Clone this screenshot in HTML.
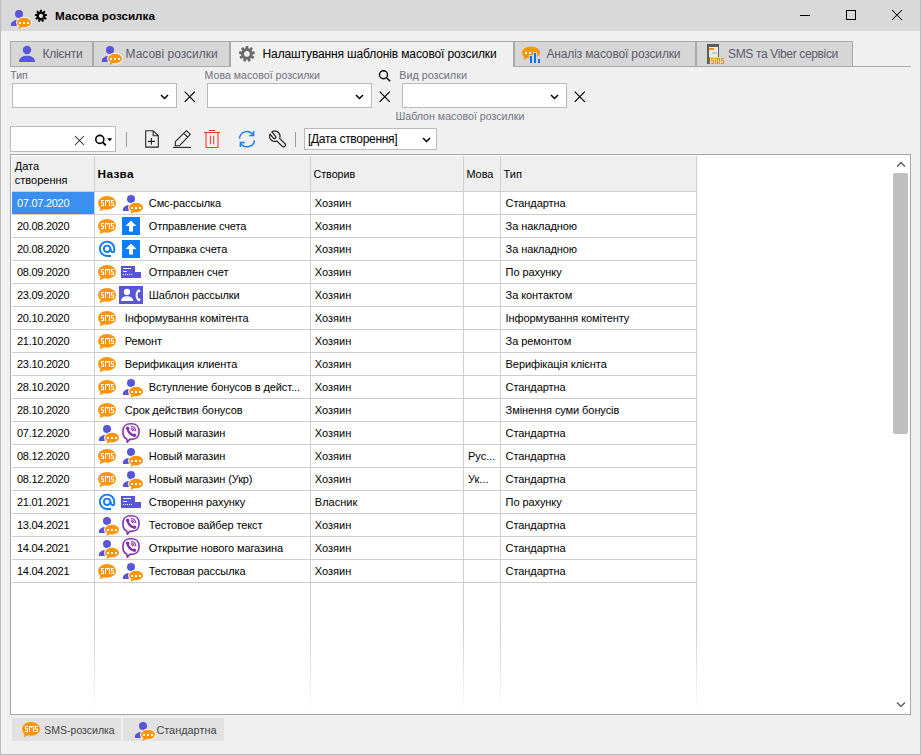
<!DOCTYPE html>
<html><head><meta charset="utf-8">
<style>
*{margin:0;padding:0;box-sizing:border-box}
html,body{width:921px;height:755px;overflow:hidden;background:#f0f0f0;font-family:"Liberation Sans",sans-serif;color:#000}
.a{position:absolute}
.t{white-space:nowrap}
svg{overflow:visible}
</style></head><body>
<div class="a" style="left:0px;top:0px;width:921px;height:755px;background:#f0f0f0;"></div>
<div class="a" style="left:0px;top:0px;width:921px;height:31px;background:#d9d9d9;"></div>
<div class="a" style="left:0px;top:0px;width:1px;height:755px;background:#bcbcbc;"></div>
<div class="a" style="left:920px;top:0px;width:1px;height:755px;background:#bcbcbc;"></div>
<div class="a" style="left:0px;top:754px;width:921px;height:1px;background:#bcbcbc;"></div>
<svg class="a" style="left:10px;top:9px" width="21" height="20" viewBox="0 0 21 20"><circle cx="9" cy="4.9" r="4" fill="#5856d6"/><path d="M0.9 17 L0.9 14.8 C1.6 12.6 4 11.2 6.8 11 L6.8 17 Z" fill="#5856d6"/><ellipse cx="14" cy="13.6" rx="7.9" ry="5.8" fill="#fff"/><ellipse cx="14" cy="13.6" rx="7" ry="4.9" fill="#fd950a"/><path d="M9.5 16.5 L8.6 19.9 L13 17.8 Z" fill="#fd950a"/><rect x="9" y="13" width="2" height="2" fill="#fff"/><rect x="13" y="13" width="2" height="2" fill="#fff"/><rect x="17" y="13" width="2" height="2" fill="#fff"/></svg>
<svg class="a" style="left:0;top:0" width="921" height="100" viewBox="0 0 921 100"><path d="M39.70 11.79 L39.57 11.83 L39.44 11.88 L39.30 11.93 L39.18 11.98 L39.15 12.00 L37.75 10.62 L36.31 11.83 L37.42 13.45 L37.37 13.51 L37.30 13.63 L37.23 13.75 L37.16 13.87 L37.09 14.00 L37.06 14.07 L35.11 13.91 L34.78 15.77 L36.67 16.29 L36.67 16.32 L36.69 16.46 L36.71 16.60 L36.73 16.74 L36.76 16.88 L36.79 17.00 L35.19 18.13 L36.14 19.77 L37.92 18.95 L38.01 19.04 L38.11 19.13 L38.22 19.22 L38.33 19.31 L38.45 19.40 L38.47 19.41 L37.98 21.31 L39.75 21.96 L40.59 20.18 L40.67 20.19 L40.81 20.20 L40.95 20.20 L41.09 20.20 L41.23 20.19 L41.31 20.18 L42.15 21.96 L43.92 21.31 L43.43 19.41 L43.45 19.40 L43.57 19.31 L43.68 19.22 L43.79 19.13 L43.89 19.04 L43.98 18.95 L45.76 19.77 L46.71 18.13 L45.11 17.00 L45.14 16.88 L45.17 16.74 L45.19 16.60 L45.21 16.46 L45.23 16.32 L45.23 16.29 L47.12 15.77 L46.79 13.91 L44.84 14.07 L44.81 14.00 L44.74 13.87 L44.67 13.75 L44.60 13.63 L44.53 13.51 L44.48 13.45 L45.59 11.83 L44.15 10.62 L42.75 12.00 L42.72 11.98 L42.60 11.93 L42.46 11.88 L42.33 11.83 L42.20 11.79 L42.08 11.75 L41.90 9.80 L40.01 9.80 L39.82 11.75 L39.70 11.79 Z M43.05 16.00 L43.04 16.11 L43.03 16.21 L43.01 16.31 L42.99 16.41 L42.96 16.51 L42.93 16.61 L42.89 16.70 L42.85 16.80 L42.80 16.89 L42.75 16.98 L42.70 17.07 L42.64 17.15 L42.57 17.23 L42.51 17.31 L42.43 17.38 L42.36 17.46 L42.28 17.52 L42.20 17.59 L42.12 17.65 L42.03 17.70 L41.94 17.75 L41.85 17.80 L41.75 17.84 L41.66 17.88 L41.56 17.91 L41.46 17.94 L41.36 17.96 L41.26 17.98 L41.16 17.99 L41.05 18.00 L40.95 18.00 L40.85 18.00 L40.74 17.99 L40.64 17.98 L40.54 17.96 L40.44 17.94 L40.34 17.91 L40.24 17.88 L40.15 17.84 L40.05 17.80 L39.96 17.75 L39.87 17.70 L39.78 17.65 L39.70 17.59 L39.62 17.52 L39.54 17.46 L39.47 17.38 L39.39 17.31 L39.33 17.23 L39.26 17.15 L39.20 17.07 L39.15 16.98 L39.10 16.89 L39.05 16.80 L39.01 16.70 L38.97 16.61 L38.94 16.51 L38.91 16.41 L38.89 16.31 L38.87 16.21 L38.86 16.11 L38.85 16.00 L38.85 15.90 L38.85 15.80 L38.86 15.69 L38.87 15.59 L38.89 15.49 L38.91 15.39 L38.94 15.29 L38.97 15.19 L39.01 15.10 L39.05 15.00 L39.10 14.91 L39.15 14.82 L39.20 14.73 L39.26 14.65 L39.33 14.57 L39.39 14.49 L39.47 14.42 L39.54 14.34 L39.62 14.28 L39.70 14.21 L39.78 14.15 L39.87 14.10 L39.96 14.05 L40.05 14.00 L40.15 13.96 L40.24 13.92 L40.34 13.89 L40.44 13.86 L40.54 13.84 L40.64 13.82 L40.74 13.81 L40.85 13.80 L40.95 13.80 L41.05 13.80 L41.16 13.81 L41.26 13.82 L41.36 13.84 L41.46 13.86 L41.56 13.89 L41.66 13.92 L41.75 13.96 L41.85 14.00 L41.94 14.05 L42.03 14.10 L42.12 14.15 L42.20 14.21 L42.28 14.28 L42.36 14.34 L42.43 14.42 L42.51 14.49 L42.57 14.57 L42.64 14.65 L42.70 14.73 L42.75 14.82 L42.80 14.91 L42.85 15.00 L42.89 15.10 L42.93 15.19 L42.96 15.29 L42.99 15.39 L43.01 15.49 L43.03 15.59 L43.04 15.69 L43.05 15.80 L43.05 15.90 L43.05 16.00 Z" fill="#000" fill-rule="evenodd"/></svg>
<div class="a t" style="left:55px;top:7.95px;font-size:11.7px;line-height:15px;color:#000;font-weight:bold;">Масова розсилка</div>
<div class="a" style="left:800px;top:15px;width:10px;height:1px;background:#000;"></div>
<div class="a" style="left:846px;top:10px;width:10px;height:10px;background:transparent;border:1px solid #000;"></div>
<svg class="a" style="left:891px;top:9px" width="12" height="12" viewBox="0 0 12 12"><path d="M1 1 L11 11 M11 1 L1 11" stroke="#000" stroke-width="1.05"/></svg>
<div class="a" style="left:10px;top:66px;width:901px;height:1px;background:#a9a9a9;"></div>
<div class="a" style="left:10px;top:41px;width:83px;height:26px;background:#d6d6d6;border:1px solid #a9a9a9;"></div>
<div class="a" style="left:93px;top:41px;width:137px;height:26px;background:#d6d6d6;border:1px solid #a9a9a9;"></div>
<div class="a" style="left:514px;top:41px;width:182px;height:26px;background:#d6d6d6;border:1px solid #a9a9a9;"></div>
<div class="a" style="left:696px;top:41px;width:157px;height:26px;background:#d6d6d6;border:1px solid #a9a9a9;"></div>
<div class="a" style="left:230px;top:41px;width:284px;height:26px;background:#f0f0f0;border:1px solid #a9a9a9;border-bottom:none"></div>
<svg class="a" style="left:18px;top:45px" width="18" height="18" viewBox="0 0 18 18"><circle cx="9" cy="5" r="4.2" fill="#5856d6"/><path d="M1 17 C1 12.5 5 10.8 9 10.8 C13 10.8 17 12.5 17 17 Z" fill="#5856d6"/></svg>
<div class="a t" style="left:42.4px;top:45.84px;font-size:12px;line-height:16px;color:#5b5b6b;font-weight:normal;letter-spacing:-0.23px">Клієнти</div>
<svg class="a" style="left:101px;top:45px" width="21" height="20" viewBox="0 0 21 20"><circle cx="9" cy="4.9" r="4" fill="#5856d6"/><path d="M0.9 17 L0.9 14.8 C1.6 12.6 4 11.2 6.8 11 L6.8 17 Z" fill="#5856d6"/><ellipse cx="14" cy="13.6" rx="7.9" ry="5.8" fill="#fff"/><ellipse cx="14" cy="13.6" rx="7" ry="4.9" fill="#fd950a"/><path d="M9.5 16.5 L8.6 19.9 L13 17.8 Z" fill="#fd950a"/><rect x="9" y="13" width="2" height="2" fill="#fff"/><rect x="13" y="13" width="2" height="2" fill="#fff"/><rect x="17" y="13" width="2" height="2" fill="#fff"/></svg>
<div class="a t" style="left:125.5px;top:45.84px;font-size:12px;line-height:16px;color:#5b5b6b;font-weight:normal;">Масові розсилки</div>
<svg class="a" style="left:0;top:0" width="921" height="100" viewBox="0 0 921 100"><path d="M245.42 48.39 L245.25 48.45 L245.07 48.50 L244.89 48.57 L244.72 48.63 L244.55 48.71 L244.48 48.74 L242.75 47.07 L240.89 48.63 L242.24 50.62 L242.16 50.73 L242.06 50.89 L241.96 51.05 L241.87 51.21 L241.79 51.38 L241.73 51.50 L239.33 51.33 L238.91 53.72 L241.22 54.39 L241.23 54.46 L241.25 54.64 L241.28 54.83 L241.31 55.01 L241.35 55.19 L241.39 55.38 L241.40 55.38 L239.45 56.80 L240.67 58.90 L242.86 57.92 L242.87 57.93 L243.00 58.06 L243.14 58.19 L243.28 58.31 L243.43 58.42 L243.58 58.53 L243.64 58.57 L243.06 60.91 L245.34 61.74 L246.40 59.58 L246.53 59.59 L246.71 59.60 L246.90 59.60 L247.09 59.60 L247.27 59.59 L247.40 59.58 L248.46 61.74 L250.74 60.91 L250.16 58.57 L250.22 58.53 L250.37 58.42 L250.52 58.31 L250.66 58.19 L250.80 58.06 L250.93 57.93 L250.94 57.92 L253.13 58.90 L254.35 56.80 L252.40 55.38 L252.41 55.38 L252.45 55.19 L252.49 55.01 L252.52 54.83 L252.55 54.64 L252.57 54.46 L252.58 54.39 L254.89 53.72 L254.47 51.33 L252.07 51.50 L252.01 51.38 L251.93 51.21 L251.84 51.05 L251.74 50.89 L251.64 50.73 L251.56 50.62 L252.91 48.63 L251.05 47.07 L249.32 48.74 L249.25 48.71 L249.08 48.63 L248.91 48.57 L248.73 48.50 L248.55 48.45 L248.38 48.39 L248.37 48.39 L248.12 46.00 L245.69 46.00 L245.43 48.39 L245.42 48.39 Z M249.80 54.04 L249.79 54.18 L249.77 54.33 L249.74 54.47 L249.71 54.60 L249.68 54.74 L249.63 54.88 L249.58 55.01 L249.52 55.14 L249.46 55.27 L249.39 55.39 L249.31 55.51 L249.23 55.63 L249.14 55.74 L249.05 55.85 L248.95 55.95 L248.85 56.05 L248.74 56.14 L248.63 56.23 L248.51 56.31 L248.39 56.39 L248.27 56.46 L248.14 56.52 L248.01 56.58 L247.88 56.63 L247.74 56.68 L247.60 56.71 L247.47 56.74 L247.33 56.77 L247.18 56.79 L247.04 56.80 L246.90 56.80 L246.76 56.80 L246.62 56.79 L246.47 56.77 L246.33 56.74 L246.20 56.71 L246.06 56.68 L245.92 56.63 L245.79 56.58 L245.66 56.52 L245.53 56.46 L245.41 56.39 L245.29 56.31 L245.17 56.23 L245.06 56.14 L244.95 56.05 L244.85 55.95 L244.75 55.85 L244.66 55.74 L244.57 55.63 L244.49 55.51 L244.41 55.39 L244.34 55.27 L244.28 55.14 L244.22 55.01 L244.17 54.88 L244.12 54.74 L244.09 54.60 L244.06 54.47 L244.03 54.33 L244.01 54.18 L244.00 54.04 L244.00 53.90 L244.00 53.76 L244.01 53.62 L244.03 53.47 L244.06 53.33 L244.09 53.20 L244.12 53.06 L244.17 52.92 L244.22 52.79 L244.28 52.66 L244.34 52.53 L244.41 52.41 L244.49 52.29 L244.57 52.17 L244.66 52.06 L244.75 51.95 L244.85 51.85 L244.95 51.75 L245.06 51.66 L245.17 51.57 L245.29 51.49 L245.41 51.41 L245.53 51.34 L245.66 51.28 L245.79 51.22 L245.92 51.17 L246.06 51.12 L246.20 51.09 L246.33 51.06 L246.47 51.03 L246.62 51.01 L246.76 51.00 L246.90 51.00 L247.04 51.00 L247.18 51.01 L247.33 51.03 L247.47 51.06 L247.60 51.09 L247.74 51.12 L247.88 51.17 L248.01 51.22 L248.14 51.28 L248.27 51.34 L248.39 51.41 L248.51 51.49 L248.63 51.57 L248.74 51.66 L248.85 51.75 L248.95 51.85 L249.05 51.95 L249.14 52.06 L249.23 52.17 L249.31 52.29 L249.39 52.41 L249.46 52.53 L249.52 52.66 L249.58 52.79 L249.63 52.92 L249.68 53.06 L249.71 53.20 L249.74 53.33 L249.77 53.47 L249.79 53.62 L249.80 53.76 L249.80 53.90 L249.80 54.04 Z" fill="#6a6a6a" fill-rule="evenodd"/></svg>
<div class="a t" style="left:262.6px;top:45.84px;font-size:12px;line-height:16px;color:#000;font-weight:normal;letter-spacing:-0.14px">Налаштування шаблонів масової розсилки</div>
<svg class="a" style="left:0;top:0" width="921" height="100" viewBox="0 0 921 100"><ellipse cx="531" cy="52.6" rx="9.2" ry="6" fill="#fd950a"/><path d="M523.3 55.5 L524.3 59.8 L528.5 57.2 Z" fill="#fd950a"/><rect x="525" y="52" width="2" height="2" fill="#fff"/><rect x="529" y="52" width="2" height="2" fill="#fff"/><path d="M529 63 V55 H533 V52 H537 V58 H541 V63 Z" fill="#d6d6d6"/><rect x="530" y="56" width="2" height="7" fill="#0a70f5"/><rect x="534" y="53" width="2" height="10" fill="#0a70f5"/><rect x="538" y="59" width="2" height="4" fill="#0a70f5"/></svg>
<div class="a t" style="left:546.5px;top:45.84px;font-size:12px;line-height:16px;color:#5b5b6b;font-weight:normal;letter-spacing:-0.15px">Аналіз масової розсилки</div>
<svg class="a" style="left:0;top:0" width="921" height="100" viewBox="0 0 921 100" shape-rendering="crispEdges"><rect x="707" y="44" width="12" height="3" fill="#5c5c5c"/><rect x="707" y="44" width="2" height="20" fill="#5c5c5c"/><rect x="718" y="44" width="1" height="13" fill="#5c5c5c"/><rect x="709" y="57" width="1" height="7" fill="#777"/><rect x="709" y="47" width="9" height="10" fill="#e9e9e9"/><rect x="709" y="48" width="5" height="2" fill="#ff9400"/><rect x="712" y="52" width="5" height="2" fill="#c8c8c8"/><rect x="711" y="58" width="3" height="1" fill="#ff9400"/><rect x="711" y="58" width="1" height="3" fill="#ff9400"/><rect x="711" y="60" width="3" height="1" fill="#ff9400"/><rect x="713" y="60" width="1" height="4" fill="#ff9400"/><rect x="711" y="63" width="3" height="1" fill="#ff9400"/><rect x="715" y="58" width="5" height="1" fill="#ff9400"/><rect x="715" y="58" width="1" height="6" fill="#ff9400"/><rect x="719" y="58" width="1" height="6" fill="#ff9400"/><rect x="717" y="58" width="1" height="4" fill="#ff9400"/><rect x="717" y="62" width="1" height="2" fill="#777"/><rect x="721" y="58" width="3" height="1" fill="#ff9400"/><rect x="721" y="58" width="1" height="3" fill="#ff9400"/><rect x="721" y="60" width="3" height="1" fill="#ff9400"/><rect x="723" y="60" width="1" height="4" fill="#ff9400"/><rect x="721" y="63" width="3" height="1" fill="#ff9400"/></svg>
<div class="a t" style="left:728px;top:45.84px;font-size:12px;line-height:16px;color:#5b5b6b;font-weight:normal;letter-spacing:-0.35px">SMS та Viber сервіси</div>
<div class="a t" style="left:10.3px;top:69.40px;font-size:10.4px;line-height:14px;color:#707080;font-weight:normal;">Тип</div>
<div class="a t" style="left:204.6px;top:68.33px;font-size:10.6px;line-height:14px;color:#707080;font-weight:normal;">Мова масової розсилки</div>
<div class="a t" style="left:399.2px;top:68.26px;font-size:10.8px;line-height:14px;color:#707080;font-weight:normal;">Вид розсилки</div>
<div class="a t" style="left:395.5px;top:109.31px;font-size:10.65px;line-height:14px;color:#707080;font-weight:normal;">Шаблон масової розсилки</div>
<div class="a" style="left:12px;top:83px;width:165px;height:25px;background:#fff;border:1px solid #b9b9b9;"></div>
<svg class="a" style="left:160px;top:94px" width="9" height="6" viewBox="0 0 9 6"><path d="M1 1 L4.5 4.5 L8 1" fill="none" stroke="#000" stroke-width="1.5"/></svg>
<svg class="a" style="left:184px;top:90.5px" width="12" height="12" viewBox="0 0 12 12"><path d="M0.7 0.7 L10.8 10.8 M10.8 0.7 L0.7 10.8" stroke="#000" stroke-width="1.2"/></svg>
<div class="a" style="left:207px;top:83px;width:165px;height:25px;background:#fff;border:1px solid #b9b9b9;"></div>
<svg class="a" style="left:355px;top:94px" width="9" height="6" viewBox="0 0 9 6"><path d="M1 1 L4.5 4.5 L8 1" fill="none" stroke="#000" stroke-width="1.5"/></svg>
<svg class="a" style="left:379px;top:90.5px" width="12" height="12" viewBox="0 0 12 12"><path d="M0.7 0.7 L10.8 10.8 M10.8 0.7 L0.7 10.8" stroke="#000" stroke-width="1.2"/></svg>
<div class="a" style="left:402px;top:83px;width:165px;height:25px;background:#fff;border:1px solid #b9b9b9;"></div>
<svg class="a" style="left:550px;top:94px" width="9" height="6" viewBox="0 0 9 6"><path d="M1 1 L4.5 4.5 L8 1" fill="none" stroke="#000" stroke-width="1.5"/></svg>
<svg class="a" style="left:574px;top:90.5px" width="12" height="12" viewBox="0 0 12 12"><path d="M0.7 0.7 L10.8 10.8 M10.8 0.7 L0.7 10.8" stroke="#000" stroke-width="1.2"/></svg>
<svg class="a" style="left:0px;top:0px" width="921" height="100" viewBox="0 0 921 100"><circle cx="383.5" cy="74.7" r="4" fill="none" stroke="#000" stroke-width="1.35"/><path d="M386.5 77.7 L390.2 81.3" stroke="#000" stroke-width="1.45"/></svg>
<div class="a" style="left:10px;top:126px;width:106px;height:26px;background:#fff;border:1px solid #b9b9b9;"></div>
<div class="a" style="left:295px;top:132px;width:1px;height:15px;background:#9a9a9a;"></div>
<div class="a" style="left:126px;top:132px;width:1px;height:15px;background:#9a9a9a;"></div>
<svg class="a" style="left:0;top:0" width="921" height="755" viewBox="0 0 921 755"><path d="M75 136 L84 145 M84 136 L75 145" stroke="#222" stroke-width="1.05"/><circle cx="99.8" cy="139.4" r="4" fill="none" stroke="#000" stroke-width="1.6"/><path d="M102.6 142.2 L105.8 145.4" stroke="#000" stroke-width="1.9"/><path d="M107.2 138.3 L112.2 138.3 L109.7 141.2 Z" fill="#000"/><path d="M145.7 130.7 H153.2 L158.3 135.8 V147.1 H145.7 Z M153.2 130.7 V135.8 H158.3" fill="none" stroke="#222" stroke-width="1.1" stroke-linejoin="miter"/><path d="M151.4 138 V144.8 M148 141.4 H154.9" stroke="#222" stroke-width="1.1"/><path d="M175.3 145.8 L175.3 141.6 L186.5 130.6 L190.3 134.3 L179.3 145.8 Z M183.9 133.4 L187.6 137.1" fill="none" stroke="#222" stroke-width="1.1" stroke-linejoin="round"/><path d="M173 147.4 H191" stroke="#222" stroke-width="1.1"/><path d="M203.9 132.5 H220.1 M208.8 130.5 H215.2 M206 132.5 V147.5 H218 V132.5 M210.4 135.8 V144.2 M213.7 135.8 V144.2" fill="none" stroke="#ef3a2d" stroke-width="1.05"/><path d="M239.5 138.6 A7.4 7.4 0 0 1 253 134.8" fill="none" stroke="#1a80f8" stroke-width="1.5"/><path d="M253.6 130.9 V135.5 H249.2" fill="none" stroke="#1a80f8" stroke-width="1.5"/><path d="M254.5 140.3 A7.4 7.4 0 0 1 240.9 143.3" fill="none" stroke="#1a80f8" stroke-width="1.5"/><path d="M240.4 146.9 V142.6 H244.8" fill="none" stroke="#1a80f8" stroke-width="1.5"/><path d="M279.97 135.69 L279.94 135.44 L279.90 135.19 L279.84 134.94 L279.78 134.69 L279.70 134.45 L279.60 134.21 L279.50 133.98 L279.39 133.75 L279.26 133.53 L279.12 133.31 L278.98 133.10 L278.82 132.90 L278.65 132.71 L278.48 132.52 L278.29 132.35 L278.10 132.18 L277.90 132.02 L277.69 131.88 L277.47 131.74 L277.25 131.61 L277.02 131.50 L276.79 131.40 L276.55 131.30 L276.31 131.22 L276.06 131.16 L275.81 131.10 L275.56 131.06 L275.31 131.03 L275.06 131.01 L274.80 131.00 L274.54 131.01 L274.29 131.03 L274.04 131.06 L273.79 131.10 L273.54 131.16 L273.29 131.22 L273.05 131.30 L272.81 131.40 L272.58 131.50 L272.35 131.61 L272.13 131.74 L271.98 131.83 L275.53 136.30 L275.62 136.41 L275.69 136.53 L275.75 136.66 L275.79 136.80 L275.83 136.94 L275.84 137.08 L275.85 137.22 L275.84 137.36 L275.82 137.50 L275.78 137.64 L275.73 137.77 L275.67 137.90 L275.59 138.02 L275.51 138.14 L275.41 138.24 L275.30 138.33 L275.19 138.42 L275.07 138.49 L274.94 138.55 L274.80 138.59 L274.66 138.63 L274.52 138.64 L274.38 138.65 L274.24 138.64 L274.10 138.62 L273.96 138.58 L273.83 138.53 L273.70 138.47 L273.58 138.39 L273.46 138.31 L273.36 138.21 L273.27 138.10 L270.06 134.08 L270.00 134.21 L269.90 134.45 L269.82 134.69 L269.76 134.94 L269.70 135.19 L269.66 135.44 L269.63 135.69 L269.61 135.94 L269.60 136.20 L269.61 136.46 L269.63 136.71 L269.66 136.96 L269.70 137.21 L269.76 137.46 L269.82 137.71 L269.90 137.95 L270.00 138.19 L270.10 138.42 L270.21 138.65 L270.34 138.87 L270.48 139.09 L270.62 139.30 L270.78 139.50 L270.95 139.69 L271.12 139.88 L271.31 140.05 L271.50 140.22 L271.70 140.38 L271.91 140.52 L272.13 140.66 L272.35 140.79 L272.58 140.90 L272.81 141.00 L273.05 141.10 L273.29 141.18 L273.54 141.24 L273.79 141.30 L274.04 141.34 L274.29 141.37 L274.54 141.39 L274.80 141.40 L275.06 141.39 L275.31 141.37 L275.56 141.34 L275.81 141.30 L276.06 141.24 L276.31 141.18 L276.55 141.10 L276.79 141.00 L276.88 140.96 L282.30 146.32 L282.43 146.44 L282.58 146.54 L282.74 146.64 L282.90 146.71 L283.07 146.77 L283.25 146.82 L283.43 146.84 L283.61 146.85 L283.79 146.84 L283.97 146.81 L284.15 146.77 L284.32 146.71 L284.48 146.63 L284.64 146.53 L284.78 146.42 L284.92 146.30 L285.04 146.17 L285.14 146.02 L285.24 145.86 L285.31 145.70 L285.37 145.53 L285.42 145.35 L285.44 145.17 L285.45 144.99 L285.44 144.81 L285.41 144.63 L285.37 144.45 L285.31 144.28 L285.23 144.12 L285.13 143.96 L285.02 143.82 L284.90 143.68 L279.52 138.37 L279.60 138.19 L279.70 137.95 L279.78 137.71 L279.84 137.46 L279.90 137.21 L279.94 136.96 L279.97 136.71 L279.99 136.46 L280.00 136.20 L279.99 135.94 L279.97 135.69 Z" fill="none" stroke="#222" stroke-width="1.25"/></svg>
<div class="a" style="left:304px;top:128px;width:133px;height:22px;background:#fff;border:1px solid #b9b9b9;"></div>
<div class="a t" style="left:308px;top:131.34px;font-size:12px;line-height:16px;color:#000;font-weight:normal;letter-spacing:-0.3px">[Дата створення]</div>
<svg class="a" style="left:421.5px;top:136.7px" width="9" height="6" viewBox="0 0 9 6"><path d="M1 1 L4.5 4.5 L8 1" fill="none" stroke="#000" stroke-width="1.5"/></svg>
<div class="a" style="left:10px;top:154px;width:901px;height:561px;background:#fff;border:1px solid #a6a6a6;"></div>
<div class="a" style="left:12px;top:156px;width:684px;height:35px;background:#efefef;"></div>
<div class="a" style="left:12px;top:191px;width:685px;height:1px;background:#cdcdcd;"></div>
<div class="a" style="left:94px;top:156px;width:1px;height:557px;background:linear-gradient(to bottom,#cdcdcd 0,#cdcdcd 470px,rgba(205,205,205,0) 557px)"></div>
<div class="a" style="left:310px;top:156px;width:1px;height:557px;background:linear-gradient(to bottom,#cdcdcd 0,#cdcdcd 470px,rgba(205,205,205,0) 557px)"></div>
<div class="a" style="left:463px;top:156px;width:1px;height:557px;background:linear-gradient(to bottom,#cdcdcd 0,#cdcdcd 470px,rgba(205,205,205,0) 557px)"></div>
<div class="a" style="left:500px;top:156px;width:1px;height:557px;background:linear-gradient(to bottom,#cdcdcd 0,#cdcdcd 470px,rgba(205,205,205,0) 557px)"></div>
<div class="a" style="left:696px;top:156px;width:1px;height:557px;background:linear-gradient(to bottom,#cdcdcd 0,#cdcdcd 470px,rgba(205,205,205,0) 557px)"></div>
<div class="a t" style="left:14.8px;top:159.19px;font-size:11px;line-height:14px;color:#000;font-weight:normal;">Дата</div>
<div class="a t" style="left:14.8px;top:173.19px;font-size:11px;line-height:14px;color:#000;font-weight:normal;">створення</div>
<div class="a t" style="left:97.6px;top:167.41px;font-size:11.8px;line-height:15px;color:#000;font-weight:bold;letter-spacing:0.3px">Назва</div>
<div class="a t" style="left:313.5px;top:167.29px;font-size:10.7px;line-height:14px;color:#000;font-weight:normal;">Створив</div>
<div class="a t" style="left:466.4px;top:167.22px;font-size:10.9px;line-height:14px;color:#000;font-weight:normal;">Мова</div>
<div class="a t" style="left:503.6px;top:167.19px;font-size:11px;line-height:14px;color:#000;font-weight:normal;">Тип</div>
<div class="a" style="left:12px;top:214px;width:685px;height:1px;background:#cdcdcd;"></div>
<div class="a" style="left:12px;top:192px;width:82px;height:22px;background:#3b8ff0;"></div>
<div class="a t" style="left:17px;top:195.99px;font-size:11px;line-height:14px;color:#fff;font-weight:normal;letter-spacing:-0.28px">07.07.2020</div>
<div class="a t" style="left:148.8px;top:195.99px;font-size:11px;line-height:14px;color:#000;font-weight:normal;letter-spacing:-0.1px">Смс-рассылка</div>
<div class="a t" style="left:314.8px;top:195.99px;font-size:11px;line-height:14px;color:#000;font-weight:normal;">Хозяин</div>
<div class="a t" style="left:505.6px;top:195.99px;font-size:11px;line-height:14px;color:#000;font-weight:normal;letter-spacing:-0.08px">Стандартна</div>
<div class="a" style="left:12px;top:237px;width:685px;height:1px;background:#cdcdcd;"></div>
<div class="a t" style="left:17px;top:218.99px;font-size:11px;line-height:14px;color:#000;font-weight:normal;letter-spacing:-0.28px">20.08.2020</div>
<div class="a t" style="left:148.8px;top:218.99px;font-size:11px;line-height:14px;color:#000;font-weight:normal;letter-spacing:-0.1px">Отправление счета</div>
<div class="a t" style="left:314.8px;top:218.99px;font-size:11px;line-height:14px;color:#000;font-weight:normal;">Хозяин</div>
<div class="a t" style="left:505.6px;top:218.99px;font-size:11px;line-height:14px;color:#000;font-weight:normal;letter-spacing:-0.08px">За накладною</div>
<div class="a" style="left:12px;top:260px;width:685px;height:1px;background:#cdcdcd;"></div>
<div class="a t" style="left:17px;top:241.99px;font-size:11px;line-height:14px;color:#000;font-weight:normal;letter-spacing:-0.28px">20.08.2020</div>
<div class="a t" style="left:148.8px;top:241.99px;font-size:11px;line-height:14px;color:#000;font-weight:normal;letter-spacing:-0.1px">Отправка счета</div>
<div class="a t" style="left:314.8px;top:241.99px;font-size:11px;line-height:14px;color:#000;font-weight:normal;">Хозяин</div>
<div class="a t" style="left:505.6px;top:241.99px;font-size:11px;line-height:14px;color:#000;font-weight:normal;letter-spacing:-0.08px">За накладною</div>
<div class="a" style="left:12px;top:283px;width:685px;height:1px;background:#cdcdcd;"></div>
<div class="a t" style="left:17px;top:264.99px;font-size:11px;line-height:14px;color:#000;font-weight:normal;letter-spacing:-0.28px">08.09.2020</div>
<div class="a t" style="left:148.8px;top:264.99px;font-size:11px;line-height:14px;color:#000;font-weight:normal;letter-spacing:-0.1px">Отправлен счет</div>
<div class="a t" style="left:314.8px;top:264.99px;font-size:11px;line-height:14px;color:#000;font-weight:normal;">Хозяин</div>
<div class="a t" style="left:505.6px;top:264.99px;font-size:11px;line-height:14px;color:#000;font-weight:normal;letter-spacing:-0.08px">По рахунку</div>
<div class="a" style="left:12px;top:306px;width:685px;height:1px;background:#cdcdcd;"></div>
<div class="a t" style="left:17px;top:287.99px;font-size:11px;line-height:14px;color:#000;font-weight:normal;letter-spacing:-0.28px">23.09.2020</div>
<div class="a t" style="left:148.8px;top:287.99px;font-size:11px;line-height:14px;color:#000;font-weight:normal;letter-spacing:-0.1px">Шаблон рассылки</div>
<div class="a t" style="left:314.8px;top:287.99px;font-size:11px;line-height:14px;color:#000;font-weight:normal;">Хозяин</div>
<div class="a t" style="left:505.6px;top:287.99px;font-size:11px;line-height:14px;color:#000;font-weight:normal;letter-spacing:-0.08px">За контактом</div>
<div class="a" style="left:12px;top:329px;width:685px;height:1px;background:#cdcdcd;"></div>
<div class="a t" style="left:17px;top:310.99px;font-size:11px;line-height:14px;color:#000;font-weight:normal;letter-spacing:-0.28px">20.10.2020</div>
<div class="a t" style="left:124.8px;top:310.99px;font-size:11px;line-height:14px;color:#000;font-weight:normal;letter-spacing:-0.1px">Інформування комітента</div>
<div class="a t" style="left:314.8px;top:310.99px;font-size:11px;line-height:14px;color:#000;font-weight:normal;">Хозяин</div>
<div class="a t" style="left:505.6px;top:310.99px;font-size:11px;line-height:14px;color:#000;font-weight:normal;letter-spacing:-0.08px">Інформування комітенту</div>
<div class="a" style="left:12px;top:352px;width:685px;height:1px;background:#cdcdcd;"></div>
<div class="a t" style="left:17px;top:333.99px;font-size:11px;line-height:14px;color:#000;font-weight:normal;letter-spacing:-0.28px">21.10.2020</div>
<div class="a t" style="left:124.8px;top:333.99px;font-size:11px;line-height:14px;color:#000;font-weight:normal;letter-spacing:-0.1px">Ремонт</div>
<div class="a t" style="left:314.8px;top:333.99px;font-size:11px;line-height:14px;color:#000;font-weight:normal;">Хозяин</div>
<div class="a t" style="left:505.6px;top:333.99px;font-size:11px;line-height:14px;color:#000;font-weight:normal;letter-spacing:-0.08px">За ремонтом</div>
<div class="a" style="left:12px;top:375px;width:685px;height:1px;background:#cdcdcd;"></div>
<div class="a t" style="left:17px;top:356.99px;font-size:11px;line-height:14px;color:#000;font-weight:normal;letter-spacing:-0.28px">23.10.2020</div>
<div class="a t" style="left:124.8px;top:356.99px;font-size:11px;line-height:14px;color:#000;font-weight:normal;letter-spacing:-0.1px">Верификация клиента</div>
<div class="a t" style="left:314.8px;top:356.99px;font-size:11px;line-height:14px;color:#000;font-weight:normal;">Хозяин</div>
<div class="a t" style="left:505.6px;top:356.99px;font-size:11px;line-height:14px;color:#000;font-weight:normal;letter-spacing:-0.08px">Верифікація клієнта</div>
<div class="a" style="left:12px;top:398px;width:685px;height:1px;background:#cdcdcd;"></div>
<div class="a t" style="left:17px;top:379.99px;font-size:11px;line-height:14px;color:#000;font-weight:normal;letter-spacing:-0.28px">28.10.2020</div>
<div class="a t" style="left:148.8px;top:379.99px;font-size:11px;line-height:14px;color:#000;font-weight:normal;letter-spacing:-0.1px">Вступление бонусов в дейст...</div>
<div class="a t" style="left:314.8px;top:379.99px;font-size:11px;line-height:14px;color:#000;font-weight:normal;">Хозяин</div>
<div class="a t" style="left:505.6px;top:379.99px;font-size:11px;line-height:14px;color:#000;font-weight:normal;letter-spacing:-0.08px">Стандартна</div>
<div class="a" style="left:12px;top:421px;width:685px;height:1px;background:#cdcdcd;"></div>
<div class="a t" style="left:17px;top:402.99px;font-size:11px;line-height:14px;color:#000;font-weight:normal;letter-spacing:-0.28px">28.10.2020</div>
<div class="a t" style="left:124.8px;top:402.99px;font-size:11px;line-height:14px;color:#000;font-weight:normal;letter-spacing:-0.1px">Срок действия бонусов</div>
<div class="a t" style="left:314.8px;top:402.99px;font-size:11px;line-height:14px;color:#000;font-weight:normal;">Хозяин</div>
<div class="a t" style="left:505.6px;top:402.99px;font-size:11px;line-height:14px;color:#000;font-weight:normal;letter-spacing:-0.08px">Змінення суми бонусів</div>
<div class="a" style="left:12px;top:444px;width:685px;height:1px;background:#cdcdcd;"></div>
<div class="a t" style="left:17px;top:425.99px;font-size:11px;line-height:14px;color:#000;font-weight:normal;letter-spacing:-0.28px">07.12.2020</div>
<div class="a t" style="left:148.8px;top:425.99px;font-size:11px;line-height:14px;color:#000;font-weight:normal;letter-spacing:-0.1px">Новый магазин</div>
<div class="a t" style="left:314.8px;top:425.99px;font-size:11px;line-height:14px;color:#000;font-weight:normal;">Хозяин</div>
<div class="a t" style="left:505.6px;top:425.99px;font-size:11px;line-height:14px;color:#000;font-weight:normal;letter-spacing:-0.08px">Стандартна</div>
<div class="a" style="left:12px;top:467px;width:685px;height:1px;background:#cdcdcd;"></div>
<div class="a t" style="left:17px;top:448.99px;font-size:11px;line-height:14px;color:#000;font-weight:normal;letter-spacing:-0.28px">08.12.2020</div>
<div class="a t" style="left:148.8px;top:448.99px;font-size:11px;line-height:14px;color:#000;font-weight:normal;letter-spacing:-0.1px">Новый магазин</div>
<div class="a t" style="left:314.8px;top:448.99px;font-size:11px;line-height:14px;color:#000;font-weight:normal;">Хозяин</div>
<div class="a t" style="left:468px;top:448.99px;font-size:11px;line-height:14px;color:#000;font-weight:normal;">Рус...</div>
<div class="a t" style="left:505.6px;top:448.99px;font-size:11px;line-height:14px;color:#000;font-weight:normal;letter-spacing:-0.08px">Стандартна</div>
<div class="a" style="left:12px;top:490px;width:685px;height:1px;background:#cdcdcd;"></div>
<div class="a t" style="left:17px;top:471.99px;font-size:11px;line-height:14px;color:#000;font-weight:normal;letter-spacing:-0.28px">08.12.2020</div>
<div class="a t" style="left:148.8px;top:471.99px;font-size:11px;line-height:14px;color:#000;font-weight:normal;letter-spacing:-0.1px">Новый магазин (Укр)</div>
<div class="a t" style="left:314.8px;top:471.99px;font-size:11px;line-height:14px;color:#000;font-weight:normal;">Хозяин</div>
<div class="a t" style="left:468px;top:471.99px;font-size:11px;line-height:14px;color:#000;font-weight:normal;">Ук...</div>
<div class="a t" style="left:505.6px;top:471.99px;font-size:11px;line-height:14px;color:#000;font-weight:normal;letter-spacing:-0.08px">Стандартна</div>
<div class="a" style="left:12px;top:513px;width:685px;height:1px;background:#cdcdcd;"></div>
<div class="a t" style="left:17px;top:494.99px;font-size:11px;line-height:14px;color:#000;font-weight:normal;letter-spacing:-0.28px">21.01.2021</div>
<div class="a t" style="left:148.8px;top:494.99px;font-size:11px;line-height:14px;color:#000;font-weight:normal;letter-spacing:-0.1px">Створення рахунку</div>
<div class="a t" style="left:314.8px;top:494.99px;font-size:11px;line-height:14px;color:#000;font-weight:normal;">Власник</div>
<div class="a t" style="left:505.6px;top:494.99px;font-size:11px;line-height:14px;color:#000;font-weight:normal;letter-spacing:-0.08px">По рахунку</div>
<div class="a" style="left:12px;top:536px;width:685px;height:1px;background:#cdcdcd;"></div>
<div class="a t" style="left:17px;top:517.99px;font-size:11px;line-height:14px;color:#000;font-weight:normal;letter-spacing:-0.28px">13.04.2021</div>
<div class="a t" style="left:148.8px;top:517.99px;font-size:11px;line-height:14px;color:#000;font-weight:normal;letter-spacing:-0.1px">Тестовое вайбер текст</div>
<div class="a t" style="left:314.8px;top:517.99px;font-size:11px;line-height:14px;color:#000;font-weight:normal;">Хозяин</div>
<div class="a t" style="left:505.6px;top:517.99px;font-size:11px;line-height:14px;color:#000;font-weight:normal;letter-spacing:-0.08px">Стандартна</div>
<div class="a" style="left:12px;top:559px;width:685px;height:1px;background:#cdcdcd;"></div>
<div class="a t" style="left:17px;top:540.99px;font-size:11px;line-height:14px;color:#000;font-weight:normal;letter-spacing:-0.28px">14.04.2021</div>
<div class="a t" style="left:148.8px;top:540.99px;font-size:11px;line-height:14px;color:#000;font-weight:normal;letter-spacing:-0.1px">Открытие нового магазина</div>
<div class="a t" style="left:314.8px;top:540.99px;font-size:11px;line-height:14px;color:#000;font-weight:normal;">Хозяин</div>
<div class="a t" style="left:505.6px;top:540.99px;font-size:11px;line-height:14px;color:#000;font-weight:normal;letter-spacing:-0.08px">Стандартна</div>
<div class="a" style="left:12px;top:582px;width:685px;height:1px;background:#cdcdcd;"></div>
<div class="a t" style="left:17px;top:563.99px;font-size:11px;line-height:14px;color:#000;font-weight:normal;letter-spacing:-0.28px">14.04.2021</div>
<div class="a t" style="left:148.8px;top:563.99px;font-size:11px;line-height:14px;color:#000;font-weight:normal;letter-spacing:-0.1px">Тестовая рассылка</div>
<div class="a t" style="left:314.8px;top:563.99px;font-size:11px;line-height:14px;color:#000;font-weight:normal;">Хозяин</div>
<div class="a t" style="left:505.6px;top:563.99px;font-size:11px;line-height:14px;color:#000;font-weight:normal;letter-spacing:-0.08px">Стандартна</div>
<svg class="a" style="left:0;top:0" width="921" height="755" viewBox="0 0 921 755"><g transform="translate(0 0)"><g transform="translate(98 196)"><ellipse cx="9" cy="6.9" rx="9" ry="6.9" fill="#fd950a"/><path d="M2.6 10 L2 15.2 L7.5 12.6 Z" fill="#fd950a"/><g fill="#fff"><rect x="3" y="4" width="3" height="1"/><rect x="3" y="4" width="1" height="3"/><rect x="3" y="6.5" width="3" height="1"/><rect x="5" y="7" width="1" height="3"/><rect x="3" y="9" width="3" height="1"/><rect x="7" y="4" width="5" height="1"/><rect x="7" y="4" width="1" height="6"/><rect x="11" y="4" width="1" height="6"/><rect x="9" y="4" width="1" height="2"/><rect x="13" y="4" width="3" height="1"/><rect x="13" y="4" width="1" height="3"/><rect x="13" y="6.5" width="3" height="1"/><rect x="15" y="7" width="1" height="3"/><rect x="13" y="9" width="3" height="1"/></g></g><g transform="translate(122 194)"><circle cx="9" cy="4.9" r="4" fill="#5856d6"/><path d="M0.9 17 L0.9 14.8 C1.6 12.6 4 11.2 6.8 11 L6.8 17 Z" fill="#5856d6"/><ellipse cx="14" cy="13.6" rx="7.9" ry="5.8" fill="#fff"/><ellipse cx="14" cy="13.6" rx="7" ry="4.9" fill="#fd950a"/><path d="M9.5 16.5 L8.6 19.9 L13 17.8 Z" fill="#fd950a"/><rect x="9" y="13" width="2" height="2" fill="#fff"/><rect x="13" y="13" width="2" height="2" fill="#fff"/><rect x="17" y="13" width="2" height="2" fill="#fff"/></g></g><g transform="translate(0 23)"><g transform="translate(98 196)"><ellipse cx="9" cy="6.9" rx="9" ry="6.9" fill="#fd950a"/><path d="M2.6 10 L2 15.2 L7.5 12.6 Z" fill="#fd950a"/><g fill="#fff"><rect x="3" y="4" width="3" height="1"/><rect x="3" y="4" width="1" height="3"/><rect x="3" y="6.5" width="3" height="1"/><rect x="5" y="7" width="1" height="3"/><rect x="3" y="9" width="3" height="1"/><rect x="7" y="4" width="5" height="1"/><rect x="7" y="4" width="1" height="6"/><rect x="11" y="4" width="1" height="6"/><rect x="9" y="4" width="1" height="2"/><rect x="13" y="4" width="3" height="1"/><rect x="13" y="4" width="1" height="3"/><rect x="13" y="6.5" width="3" height="1"/><rect x="15" y="7" width="1" height="3"/><rect x="13" y="9" width="3" height="1"/></g></g><rect x="122" y="194" width="18" height="18" fill="#0f7cf8"/><path d="M131 197.5 L136.5 203 L133 203 L133 208.5 L129 208.5 L129 203 L125.5 203 Z" fill="#fff"/></g><g transform="translate(0 46)"><path d="M111 210 H107.07 A7.2 7.2 0 1 1 114.27 202.8 V204.5 A1.7 1.7 0 0 1 110.87 204.5 V202.8" fill="none" stroke="#0f7cf8" stroke-width="1.9"/><circle cx="107.07" cy="202.8" r="3.2" fill="none" stroke="#0f7cf8" stroke-width="1.95"/><rect x="122" y="194" width="18" height="18" fill="#0f7cf8"/><path d="M131 197.5 L136.5 203 L133 203 L133 208.5 L129 208.5 L129 203 L125.5 203 Z" fill="#fff"/></g><g transform="translate(0 69)"><g transform="translate(98 196)"><ellipse cx="9" cy="6.9" rx="9" ry="6.9" fill="#fd950a"/><path d="M2.6 10 L2 15.2 L7.5 12.6 Z" fill="#fd950a"/><g fill="#fff"><rect x="3" y="4" width="3" height="1"/><rect x="3" y="4" width="1" height="3"/><rect x="3" y="6.5" width="3" height="1"/><rect x="5" y="7" width="1" height="3"/><rect x="3" y="9" width="3" height="1"/><rect x="7" y="4" width="5" height="1"/><rect x="7" y="4" width="1" height="6"/><rect x="11" y="4" width="1" height="6"/><rect x="9" y="4" width="1" height="2"/><rect x="13" y="4" width="3" height="1"/><rect x="13" y="4" width="1" height="3"/><rect x="13" y="6.5" width="3" height="1"/><rect x="15" y="7" width="1" height="3"/><rect x="13" y="9" width="3" height="1"/></g></g><path d="M121 197 H135 V203 H141 V209 H121 Z" fill="#5856d6"/><rect x="123" y="199" width="8" height="1" fill="#fff"/><rect x="123" y="202" width="4" height="1" fill="#fff"/><g fill="#fff"><rect x="123" y="205" width="1" height="1"/><rect x="125" y="205" width="1" height="1"/><rect x="127" y="205" width="1" height="1"/><rect x="129" y="205" width="1" height="1"/><rect x="131" y="205" width="1" height="1"/></g></g><g transform="translate(0 92)"><g transform="translate(98 196)"><ellipse cx="9" cy="6.9" rx="9" ry="6.9" fill="#fd950a"/><path d="M2.6 10 L2 15.2 L7.5 12.6 Z" fill="#fd950a"/><g fill="#fff"><rect x="3" y="4" width="3" height="1"/><rect x="3" y="4" width="1" height="3"/><rect x="3" y="6.5" width="3" height="1"/><rect x="5" y="7" width="1" height="3"/><rect x="3" y="9" width="3" height="1"/><rect x="7" y="4" width="5" height="1"/><rect x="7" y="4" width="1" height="6"/><rect x="11" y="4" width="1" height="6"/><rect x="9" y="4" width="1" height="2"/><rect x="13" y="4" width="3" height="1"/><rect x="13" y="4" width="1" height="3"/><rect x="13" y="6.5" width="3" height="1"/><rect x="15" y="7" width="1" height="3"/><rect x="13" y="9" width="3" height="1"/></g></g><rect x="119" y="194" width="24" height="18" fill="#5856d6"/><circle cx="127" cy="199.9" r="3.1" fill="#fff"/><path d="M121 209 C121 206 123.5 204.3 127 204.3 C130.5 204.3 133.2 206 133.2 209 Z" fill="#fff"/><path d="M138.6 198.8 C135.9 200.2 135.9 206.2 138.6 207.6" fill="none" stroke="#fff" stroke-width="1.9"/><ellipse cx="139" cy="198.6" rx="1.6" ry="1.15" transform="rotate(40 139 198.6)" fill="#fff"/><ellipse cx="139" cy="207.8" rx="1.6" ry="1.15" transform="rotate(-40 139 207.8)" fill="#fff"/></g><g transform="translate(0 115)"><g transform="translate(98 196)"><ellipse cx="9" cy="6.9" rx="9" ry="6.9" fill="#fd950a"/><path d="M2.6 10 L2 15.2 L7.5 12.6 Z" fill="#fd950a"/><g fill="#fff"><rect x="3" y="4" width="3" height="1"/><rect x="3" y="4" width="1" height="3"/><rect x="3" y="6.5" width="3" height="1"/><rect x="5" y="7" width="1" height="3"/><rect x="3" y="9" width="3" height="1"/><rect x="7" y="4" width="5" height="1"/><rect x="7" y="4" width="1" height="6"/><rect x="11" y="4" width="1" height="6"/><rect x="9" y="4" width="1" height="2"/><rect x="13" y="4" width="3" height="1"/><rect x="13" y="4" width="1" height="3"/><rect x="13" y="6.5" width="3" height="1"/><rect x="15" y="7" width="1" height="3"/><rect x="13" y="9" width="3" height="1"/></g></g></g><g transform="translate(0 138)"><g transform="translate(98 196)"><ellipse cx="9" cy="6.9" rx="9" ry="6.9" fill="#fd950a"/><path d="M2.6 10 L2 15.2 L7.5 12.6 Z" fill="#fd950a"/><g fill="#fff"><rect x="3" y="4" width="3" height="1"/><rect x="3" y="4" width="1" height="3"/><rect x="3" y="6.5" width="3" height="1"/><rect x="5" y="7" width="1" height="3"/><rect x="3" y="9" width="3" height="1"/><rect x="7" y="4" width="5" height="1"/><rect x="7" y="4" width="1" height="6"/><rect x="11" y="4" width="1" height="6"/><rect x="9" y="4" width="1" height="2"/><rect x="13" y="4" width="3" height="1"/><rect x="13" y="4" width="1" height="3"/><rect x="13" y="6.5" width="3" height="1"/><rect x="15" y="7" width="1" height="3"/><rect x="13" y="9" width="3" height="1"/></g></g></g><g transform="translate(0 161)"><g transform="translate(98 196)"><ellipse cx="9" cy="6.9" rx="9" ry="6.9" fill="#fd950a"/><path d="M2.6 10 L2 15.2 L7.5 12.6 Z" fill="#fd950a"/><g fill="#fff"><rect x="3" y="4" width="3" height="1"/><rect x="3" y="4" width="1" height="3"/><rect x="3" y="6.5" width="3" height="1"/><rect x="5" y="7" width="1" height="3"/><rect x="3" y="9" width="3" height="1"/><rect x="7" y="4" width="5" height="1"/><rect x="7" y="4" width="1" height="6"/><rect x="11" y="4" width="1" height="6"/><rect x="9" y="4" width="1" height="2"/><rect x="13" y="4" width="3" height="1"/><rect x="13" y="4" width="1" height="3"/><rect x="13" y="6.5" width="3" height="1"/><rect x="15" y="7" width="1" height="3"/><rect x="13" y="9" width="3" height="1"/></g></g></g><g transform="translate(0 184)"><g transform="translate(98 196)"><ellipse cx="9" cy="6.9" rx="9" ry="6.9" fill="#fd950a"/><path d="M2.6 10 L2 15.2 L7.5 12.6 Z" fill="#fd950a"/><g fill="#fff"><rect x="3" y="4" width="3" height="1"/><rect x="3" y="4" width="1" height="3"/><rect x="3" y="6.5" width="3" height="1"/><rect x="5" y="7" width="1" height="3"/><rect x="3" y="9" width="3" height="1"/><rect x="7" y="4" width="5" height="1"/><rect x="7" y="4" width="1" height="6"/><rect x="11" y="4" width="1" height="6"/><rect x="9" y="4" width="1" height="2"/><rect x="13" y="4" width="3" height="1"/><rect x="13" y="4" width="1" height="3"/><rect x="13" y="6.5" width="3" height="1"/><rect x="15" y="7" width="1" height="3"/><rect x="13" y="9" width="3" height="1"/></g></g><g transform="translate(122 194)"><circle cx="9" cy="4.9" r="4" fill="#5856d6"/><path d="M0.9 17 L0.9 14.8 C1.6 12.6 4 11.2 6.8 11 L6.8 17 Z" fill="#5856d6"/><ellipse cx="14" cy="13.6" rx="7.9" ry="5.8" fill="#fff"/><ellipse cx="14" cy="13.6" rx="7" ry="4.9" fill="#fd950a"/><path d="M9.5 16.5 L8.6 19.9 L13 17.8 Z" fill="#fd950a"/><rect x="9" y="13" width="2" height="2" fill="#fff"/><rect x="13" y="13" width="2" height="2" fill="#fff"/><rect x="17" y="13" width="2" height="2" fill="#fff"/></g></g><g transform="translate(0 207)"><g transform="translate(98 196)"><ellipse cx="9" cy="6.9" rx="9" ry="6.9" fill="#fd950a"/><path d="M2.6 10 L2 15.2 L7.5 12.6 Z" fill="#fd950a"/><g fill="#fff"><rect x="3" y="4" width="3" height="1"/><rect x="3" y="4" width="1" height="3"/><rect x="3" y="6.5" width="3" height="1"/><rect x="5" y="7" width="1" height="3"/><rect x="3" y="9" width="3" height="1"/><rect x="7" y="4" width="5" height="1"/><rect x="7" y="4" width="1" height="6"/><rect x="11" y="4" width="1" height="6"/><rect x="9" y="4" width="1" height="2"/><rect x="13" y="4" width="3" height="1"/><rect x="13" y="4" width="1" height="3"/><rect x="13" y="6.5" width="3" height="1"/><rect x="15" y="7" width="1" height="3"/><rect x="13" y="9" width="3" height="1"/></g></g></g><g transform="translate(0 230)"><g transform="translate(98 194)"><circle cx="9" cy="4.9" r="4" fill="#5856d6"/><path d="M0.9 17 L0.9 14.8 C1.6 12.6 4 11.2 6.8 11 L6.8 17 Z" fill="#5856d6"/><ellipse cx="14" cy="13.6" rx="7.9" ry="5.8" fill="#fff"/><ellipse cx="14" cy="13.6" rx="7" ry="4.9" fill="#fd950a"/><path d="M9.5 16.5 L8.6 19.9 L13 17.8 Z" fill="#fd950a"/><rect x="9" y="13" width="2" height="2" fill="#fff"/><rect x="13" y="13" width="2" height="2" fill="#fff"/><rect x="17" y="13" width="2" height="2" fill="#fff"/></g><path d="M131 193.8 C136.6 193.8 139.1 195.6 139.1 201.6 C139.1 207.4 136.6 209.4 131 209.4 L129.5 209.4 L127.3 212.2 L126.8 209 C123.6 208 122.9 205.4 122.9 201.6 C122.9 195.6 125.4 193.8 131 193.8 Z" fill="none" stroke="#8431ae" stroke-width="1.6" stroke-linejoin="round"/><path d="M127.6 198.4 C127.8 201.6 130.5 204.8 134.2 205.3" fill="none" stroke="#8431ae" stroke-width="2.3" stroke-linecap="round"/><circle cx="127.6" cy="198.2" r="1.7" fill="#8431ae"/><circle cx="134.5" cy="205.2" r="1.7" fill="#8431ae"/><path d="M131.3 196.3 C133.8 196.8 135.5 198.5 135.9 201 M131.3 197.9 C133 198.3 133.9 199.3 134.2 200.8 M131.3 199.5 C132 199.7 132.4 200.1 132.6 200.8" fill="none" stroke="#8431ae" stroke-width="1.05" stroke-linecap="round"/></g><g transform="translate(0 253)"><g transform="translate(98 196)"><ellipse cx="9" cy="6.9" rx="9" ry="6.9" fill="#fd950a"/><path d="M2.6 10 L2 15.2 L7.5 12.6 Z" fill="#fd950a"/><g fill="#fff"><rect x="3" y="4" width="3" height="1"/><rect x="3" y="4" width="1" height="3"/><rect x="3" y="6.5" width="3" height="1"/><rect x="5" y="7" width="1" height="3"/><rect x="3" y="9" width="3" height="1"/><rect x="7" y="4" width="5" height="1"/><rect x="7" y="4" width="1" height="6"/><rect x="11" y="4" width="1" height="6"/><rect x="9" y="4" width="1" height="2"/><rect x="13" y="4" width="3" height="1"/><rect x="13" y="4" width="1" height="3"/><rect x="13" y="6.5" width="3" height="1"/><rect x="15" y="7" width="1" height="3"/><rect x="13" y="9" width="3" height="1"/></g></g><g transform="translate(122 194)"><circle cx="9" cy="4.9" r="4" fill="#5856d6"/><path d="M0.9 17 L0.9 14.8 C1.6 12.6 4 11.2 6.8 11 L6.8 17 Z" fill="#5856d6"/><ellipse cx="14" cy="13.6" rx="7.9" ry="5.8" fill="#fff"/><ellipse cx="14" cy="13.6" rx="7" ry="4.9" fill="#fd950a"/><path d="M9.5 16.5 L8.6 19.9 L13 17.8 Z" fill="#fd950a"/><rect x="9" y="13" width="2" height="2" fill="#fff"/><rect x="13" y="13" width="2" height="2" fill="#fff"/><rect x="17" y="13" width="2" height="2" fill="#fff"/></g></g><g transform="translate(0 276)"><g transform="translate(98 196)"><ellipse cx="9" cy="6.9" rx="9" ry="6.9" fill="#fd950a"/><path d="M2.6 10 L2 15.2 L7.5 12.6 Z" fill="#fd950a"/><g fill="#fff"><rect x="3" y="4" width="3" height="1"/><rect x="3" y="4" width="1" height="3"/><rect x="3" y="6.5" width="3" height="1"/><rect x="5" y="7" width="1" height="3"/><rect x="3" y="9" width="3" height="1"/><rect x="7" y="4" width="5" height="1"/><rect x="7" y="4" width="1" height="6"/><rect x="11" y="4" width="1" height="6"/><rect x="9" y="4" width="1" height="2"/><rect x="13" y="4" width="3" height="1"/><rect x="13" y="4" width="1" height="3"/><rect x="13" y="6.5" width="3" height="1"/><rect x="15" y="7" width="1" height="3"/><rect x="13" y="9" width="3" height="1"/></g></g><g transform="translate(122 194)"><circle cx="9" cy="4.9" r="4" fill="#5856d6"/><path d="M0.9 17 L0.9 14.8 C1.6 12.6 4 11.2 6.8 11 L6.8 17 Z" fill="#5856d6"/><ellipse cx="14" cy="13.6" rx="7.9" ry="5.8" fill="#fff"/><ellipse cx="14" cy="13.6" rx="7" ry="4.9" fill="#fd950a"/><path d="M9.5 16.5 L8.6 19.9 L13 17.8 Z" fill="#fd950a"/><rect x="9" y="13" width="2" height="2" fill="#fff"/><rect x="13" y="13" width="2" height="2" fill="#fff"/><rect x="17" y="13" width="2" height="2" fill="#fff"/></g></g><g transform="translate(0 299)"><path d="M111 210 H107.07 A7.2 7.2 0 1 1 114.27 202.8 V204.5 A1.7 1.7 0 0 1 110.87 204.5 V202.8" fill="none" stroke="#0f7cf8" stroke-width="1.9"/><circle cx="107.07" cy="202.8" r="3.2" fill="none" stroke="#0f7cf8" stroke-width="1.95"/><path d="M121 197 H135 V203 H141 V209 H121 Z" fill="#5856d6"/><rect x="123" y="199" width="8" height="1" fill="#fff"/><rect x="123" y="202" width="4" height="1" fill="#fff"/><g fill="#fff"><rect x="123" y="205" width="1" height="1"/><rect x="125" y="205" width="1" height="1"/><rect x="127" y="205" width="1" height="1"/><rect x="129" y="205" width="1" height="1"/><rect x="131" y="205" width="1" height="1"/></g></g><g transform="translate(0 322)"><g transform="translate(98 194)"><circle cx="9" cy="4.9" r="4" fill="#5856d6"/><path d="M0.9 17 L0.9 14.8 C1.6 12.6 4 11.2 6.8 11 L6.8 17 Z" fill="#5856d6"/><ellipse cx="14" cy="13.6" rx="7.9" ry="5.8" fill="#fff"/><ellipse cx="14" cy="13.6" rx="7" ry="4.9" fill="#fd950a"/><path d="M9.5 16.5 L8.6 19.9 L13 17.8 Z" fill="#fd950a"/><rect x="9" y="13" width="2" height="2" fill="#fff"/><rect x="13" y="13" width="2" height="2" fill="#fff"/><rect x="17" y="13" width="2" height="2" fill="#fff"/></g><path d="M131 193.8 C136.6 193.8 139.1 195.6 139.1 201.6 C139.1 207.4 136.6 209.4 131 209.4 L129.5 209.4 L127.3 212.2 L126.8 209 C123.6 208 122.9 205.4 122.9 201.6 C122.9 195.6 125.4 193.8 131 193.8 Z" fill="none" stroke="#8431ae" stroke-width="1.6" stroke-linejoin="round"/><path d="M127.6 198.4 C127.8 201.6 130.5 204.8 134.2 205.3" fill="none" stroke="#8431ae" stroke-width="2.3" stroke-linecap="round"/><circle cx="127.6" cy="198.2" r="1.7" fill="#8431ae"/><circle cx="134.5" cy="205.2" r="1.7" fill="#8431ae"/><path d="M131.3 196.3 C133.8 196.8 135.5 198.5 135.9 201 M131.3 197.9 C133 198.3 133.9 199.3 134.2 200.8 M131.3 199.5 C132 199.7 132.4 200.1 132.6 200.8" fill="none" stroke="#8431ae" stroke-width="1.05" stroke-linecap="round"/></g><g transform="translate(0 345)"><g transform="translate(98 194)"><circle cx="9" cy="4.9" r="4" fill="#5856d6"/><path d="M0.9 17 L0.9 14.8 C1.6 12.6 4 11.2 6.8 11 L6.8 17 Z" fill="#5856d6"/><ellipse cx="14" cy="13.6" rx="7.9" ry="5.8" fill="#fff"/><ellipse cx="14" cy="13.6" rx="7" ry="4.9" fill="#fd950a"/><path d="M9.5 16.5 L8.6 19.9 L13 17.8 Z" fill="#fd950a"/><rect x="9" y="13" width="2" height="2" fill="#fff"/><rect x="13" y="13" width="2" height="2" fill="#fff"/><rect x="17" y="13" width="2" height="2" fill="#fff"/></g><path d="M131 193.8 C136.6 193.8 139.1 195.6 139.1 201.6 C139.1 207.4 136.6 209.4 131 209.4 L129.5 209.4 L127.3 212.2 L126.8 209 C123.6 208 122.9 205.4 122.9 201.6 C122.9 195.6 125.4 193.8 131 193.8 Z" fill="none" stroke="#8431ae" stroke-width="1.6" stroke-linejoin="round"/><path d="M127.6 198.4 C127.8 201.6 130.5 204.8 134.2 205.3" fill="none" stroke="#8431ae" stroke-width="2.3" stroke-linecap="round"/><circle cx="127.6" cy="198.2" r="1.7" fill="#8431ae"/><circle cx="134.5" cy="205.2" r="1.7" fill="#8431ae"/><path d="M131.3 196.3 C133.8 196.8 135.5 198.5 135.9 201 M131.3 197.9 C133 198.3 133.9 199.3 134.2 200.8 M131.3 199.5 C132 199.7 132.4 200.1 132.6 200.8" fill="none" stroke="#8431ae" stroke-width="1.05" stroke-linecap="round"/></g><g transform="translate(0 368)"><g transform="translate(98 196)"><ellipse cx="9" cy="6.9" rx="9" ry="6.9" fill="#fd950a"/><path d="M2.6 10 L2 15.2 L7.5 12.6 Z" fill="#fd950a"/><g fill="#fff"><rect x="3" y="4" width="3" height="1"/><rect x="3" y="4" width="1" height="3"/><rect x="3" y="6.5" width="3" height="1"/><rect x="5" y="7" width="1" height="3"/><rect x="3" y="9" width="3" height="1"/><rect x="7" y="4" width="5" height="1"/><rect x="7" y="4" width="1" height="6"/><rect x="11" y="4" width="1" height="6"/><rect x="9" y="4" width="1" height="2"/><rect x="13" y="4" width="3" height="1"/><rect x="13" y="4" width="1" height="3"/><rect x="13" y="6.5" width="3" height="1"/><rect x="15" y="7" width="1" height="3"/><rect x="13" y="9" width="3" height="1"/></g></g><g transform="translate(122 194)"><circle cx="9" cy="4.9" r="4" fill="#5856d6"/><path d="M0.9 17 L0.9 14.8 C1.6 12.6 4 11.2 6.8 11 L6.8 17 Z" fill="#5856d6"/><ellipse cx="14" cy="13.6" rx="7.9" ry="5.8" fill="#fff"/><ellipse cx="14" cy="13.6" rx="7" ry="4.9" fill="#fd950a"/><path d="M9.5 16.5 L8.6 19.9 L13 17.8 Z" fill="#fd950a"/><rect x="9" y="13" width="2" height="2" fill="#fff"/><rect x="13" y="13" width="2" height="2" fill="#fff"/><rect x="17" y="13" width="2" height="2" fill="#fff"/></g></g></svg>
<svg class="a" style="left:895.5px;top:161px" width="10" height="7" viewBox="0 0 10 7"><path d="M1 5.5 L5 1.5 L9 5.5" fill="none" stroke="#606060" stroke-width="1.5"/></svg>
<div class="a" style="left:893px;top:173px;width:15px;height:261px;background:#bfbfbf;border-radius:2px"></div>
<svg class="a" style="left:895.5px;top:701px" width="10" height="7" viewBox="0 0 10 7"><path d="M1 1.5 L5 5.5 L9 1.5" fill="none" stroke="#606060" stroke-width="1.5"/></svg>
<div class="a" style="left:12px;top:718px;width:109px;height:23px;background:#e1e1e1;"></div>
<div class="a" style="left:123px;top:718px;width:101px;height:23px;background:#e1e1e1;"></div>
<svg class="a" style="left:22px;top:722px" width="19" height="16" viewBox="0 0 19 16"><ellipse cx="9" cy="6.9" rx="9" ry="6.9" fill="#fd950a"/><path d="M2.6 10 L2 15.2 L7.5 12.6 Z" fill="#fd950a"/><g fill="#fff"><rect x="3" y="4" width="3" height="1"/><rect x="3" y="4" width="1" height="3"/><rect x="3" y="6.5" width="3" height="1"/><rect x="5" y="7" width="1" height="3"/><rect x="3" y="9" width="3" height="1"/><rect x="7" y="4" width="5" height="1"/><rect x="7" y="4" width="1" height="6"/><rect x="11" y="4" width="1" height="6"/><rect x="9" y="4" width="1" height="2"/><rect x="13" y="4" width="3" height="1"/><rect x="13" y="4" width="1" height="3"/><rect x="13" y="6.5" width="3" height="1"/><rect x="15" y="7" width="1" height="3"/><rect x="13" y="9" width="3" height="1"/></g></svg>
<div class="a t" style="left:44.3px;top:723.36px;font-size:10.5px;line-height:14px;color:#444;font-weight:normal;">SMS-розсилка</div>
<svg class="a" style="left:134px;top:721px" width="21" height="20" viewBox="0 0 21 20"><circle cx="9" cy="4.9" r="4" fill="#5856d6"/><path d="M0.9 17 L0.9 14.8 C1.6 12.6 4 11.2 6.8 11 L6.8 17 Z" fill="#5856d6"/><ellipse cx="14" cy="13.6" rx="7.9" ry="5.8" fill="#fff"/><ellipse cx="14" cy="13.6" rx="7" ry="4.9" fill="#fd950a"/><path d="M9.5 16.5 L8.6 19.9 L13 17.8 Z" fill="#fd950a"/><rect x="9" y="13" width="2" height="2" fill="#fff"/><rect x="13" y="13" width="2" height="2" fill="#fff"/><rect x="17" y="13" width="2" height="2" fill="#fff"/></svg>
<div class="a t" style="left:156.4px;top:723.22px;font-size:10.9px;line-height:14px;color:#444;font-weight:normal;">Стандартна</div>
</body></html>
